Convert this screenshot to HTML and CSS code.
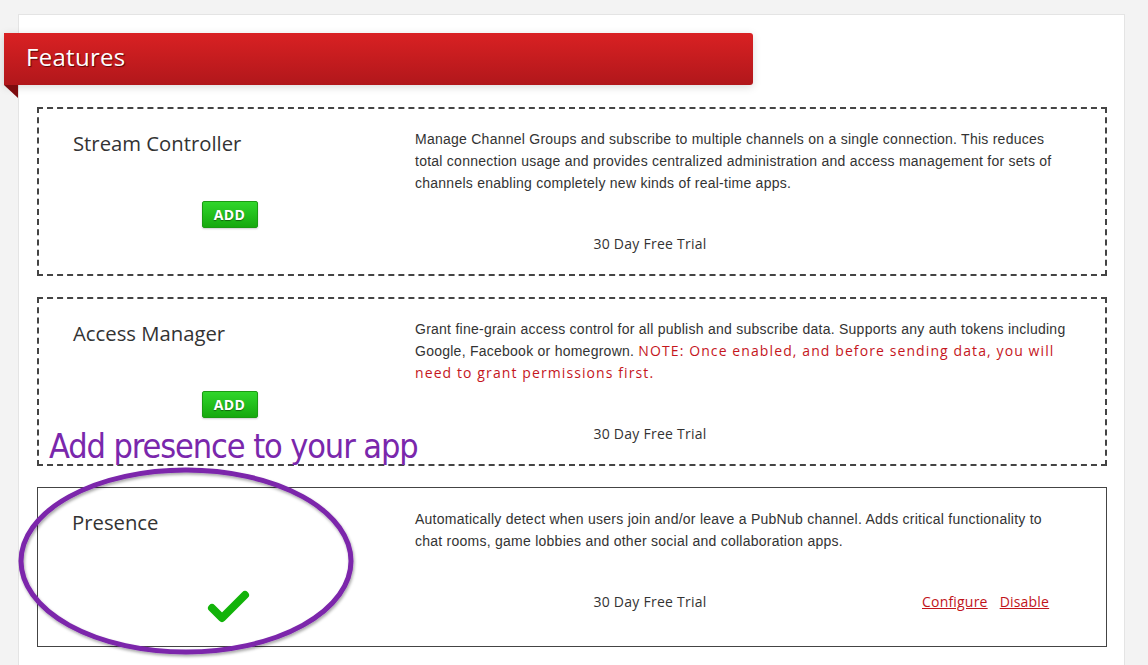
FILE: index.html
```html
<!DOCTYPE html>
<html>
<head>
<meta charset="utf-8">
<link rel="stylesheet" href="styles.css">
</head>
<body>
<div class="panel">
  <div class="banner"><h1 class="banner-title">Features</h1></div>
  <div class="cards">
    <div class="card card--dashed">
      <div class="card-left">
        <h2 class="card-title">Stream Controller</h2>
        <button class="btn-add">ADD</button>
      </div>
      <div class="card-right">
        <p class="desc">Manage Channel Groups and subscribe to multiple channels on a single connection. This reduces total connection usage and provides centralized administration and access management for sets of channels enabling completely new kinds of real-time apps.</p>
        <div class="trial-row"><span class="trial">30 Day Free Trial</span></div>
      </div>
    </div>
    <div class="card card--dashed">
      <div class="card-left">
        <h2 class="card-title">Access Manager</h2>
        <button class="btn-add">ADD</button>
      </div>
      <div class="card-right">
        <p class="desc">Grant fine-grain access control for all publish and subscribe data. Supports any auth tokens including Google, Facebook or homegrown. <span class="note">NOTE: Once enabled, and before sending data, you will need to grant permissions first.</span></p>
        <div class="trial-row"><span class="trial">30 Day Free Trial</span></div>
      </div>
    </div>
    <div class="card card--solid">
      <div class="card-left">
        <h2 class="card-title">Presence</h2>
        <svg class="check" width="44" height="34" viewBox="0 0 44 34"><path d="M5 19 L15 29 L38 6" fill="none" stroke="#13b30a" stroke-width="8" stroke-linecap="round" stroke-linejoin="round"/></svg>
      </div>
      <div class="card-right">
        <p class="desc">Automatically detect when users join and/or leave a PubNub channel. Adds critical functionality to chat rooms, game lobbies and other social and collaboration apps.</p>
        <div class="trial-row"><span class="trial">30 Day Free Trial</span><span class="links"><a href="#" class="link">Configure</a><a href="#" class="link">Disable</a></span></div>
      </div>
    </div>
  </div>
</div>
<div class="annotation">Add presence to your app</div>
<svg class="ellipse" width="350" height="200" viewBox="0 0 350 200">
  <defs><filter id="sh" x="-10%" y="-10%" width="120%" height="120%"><feDropShadow dx="1" dy="2" stdDeviation="1.5" flood-color="#000" flood-opacity="0.35"/></filter></defs>
  <ellipse cx="168" cy="95" rx="165" ry="91" fill="none" stroke="#7b25ab" stroke-width="5" filter="url(#sh)"/>
</svg>
</body>
</html>
```
FILE: styles.css
```css
html, body { margin: 0; padding: 0; }
body {
  background: #f3f3f3;
  font-family: "Lato", "Liberation Sans", sans-serif;
  color: #333;
  height: 665px;
  overflow: hidden;
}
.panel {
  margin: 14px 0 0 18px;
  width: 1107px;
  height: 700px;
  background: #fff;
  border: 1px solid #e4e4e4;
  box-sizing: border-box;
  padding-top: 18px;
}
.banner {
  position: relative;
  margin-left: -15px;
  width: 749px;
  height: 52px;
  background: linear-gradient(#d92123, #b1171b);
  border-radius: 0 3px 3px 0;
  box-shadow: 0 2px 8px rgba(0,0,0,0.15);
  display: flex;
  align-items: center;
}
.banner::after {
  content: "";
  position: absolute;
  left: 0;
  top: 52px;
  border-top: 13px solid #7d0c0f;
  border-left: 14px solid transparent;
}
.banner-title {
  margin: 0 0 6px 22px;
  font-family: "Open Sans", "Liberation Sans", sans-serif;
  font-weight: 400;
  font-size: 24px;
  color: #fff;
  text-shadow: 1px 1px 1px #5a0508;
  letter-spacing: 0.3px;
}
.cards {
  padding: 22px 18px 0 18px;
  display: flex;
  flex-direction: column;
  gap: 21px;
}
.card {
  display: flex;
  box-sizing: border-box;
  width: 1070px;
}
.card--dashed { border: 2px dashed #444; height: 169px; }
.card--solid { border: 1px solid #444; height: 160px; }
.card-left {
  width: 376px;
  display: flex;
  flex-direction: column;
}
.card--solid .card-left { width: 377px; }
.card-title {
  margin: 22px 0 0 34px;
  font-family: "Open Sans", "Liberation Sans", sans-serif;
  font-weight: 400;
  font-size: 20.3px;
  line-height: 24px;
  color: #333;
}
.btn-add {
  align-self: center;
  margin: 46px 0 0 5px;
  width: 56px;
  height: 27px;
  border: 1px solid #1a9a12;
  border-radius: 2px;
  background: linear-gradient(#2fd62a, #16a90e);
  color: #fff;
  font-family: "Open Sans", "Liberation Sans", sans-serif;
  font-weight: 700;
  font-size: 14px;
  text-shadow: 0 1px 1px rgba(0,0,0,0.45);
  padding: 0;
  box-shadow: 0 1px 2px rgba(0,0,0,0.2);
  letter-spacing: 0.3px;
}
.check {
  align-self: center;
  margin: 55px 0 0 4px;
}
.card-right {
  flex: 1;
  padding-top: 19px;
}
.card--solid .card-right { padding-top: 20px; }
.desc {
  margin: 0;
  width: 656px;
  font-family: "Liberation Sans", sans-serif;
  font-size: 14px;
  line-height: 22px;
  color: #333;
  letter-spacing: 0.25px;
}
.note {
  font-family: "Open Sans", "Liberation Sans", sans-serif;
  color: #c5161d;
  letter-spacing: 1.1px;
  font-size: 14px;
}
.trial-row {
  display: flex;
  margin-top: 39px;
  font-size: 14px;
  line-height: 22px;
}
.trial {
  width: 470px;
  text-align: center;
  font-family: "Open Sans", "Liberation Sans", sans-serif;
  font-size: 14px;
  letter-spacing: 0.25px;
  color: #333;
}
.links {
  padding-left: 37px;
  display: flex;
  gap: 12px;
}
.link {
  font-family: "Open Sans", "Liberation Sans", sans-serif;
  font-size: 14px;
  letter-spacing: 0.2px;
  color: #c1141b;
  text-decoration: underline;
}
.annotation {
  position: absolute;
  left: 49px;
  top: 424px;
  font-family: "DejaVu Sans Condensed", "DejaVu Sans", sans-serif;
  font-size: 34px;
  line-height: 44px;
  letter-spacing: -1.1px;
  color: #7a27ac;
}
.ellipse {
  position: absolute;
  left: 18px;
  top: 466px;
}
```
